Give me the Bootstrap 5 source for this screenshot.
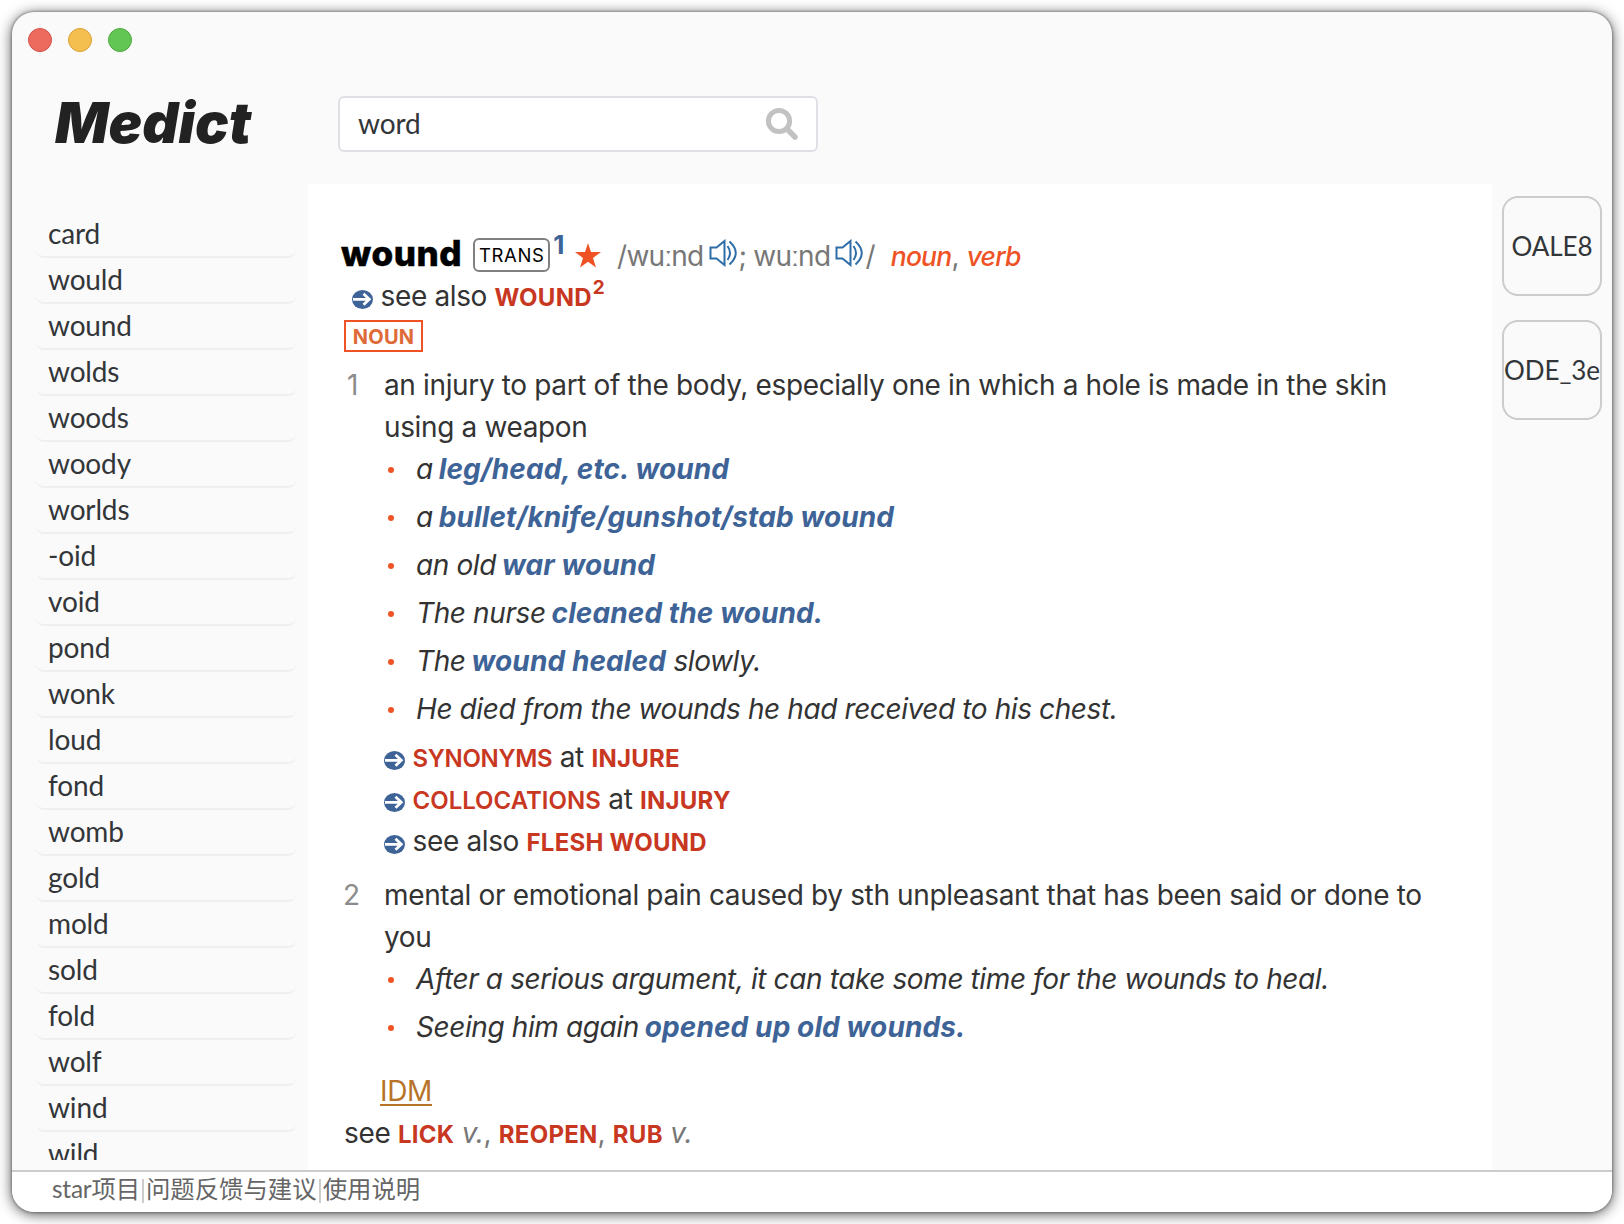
<!DOCTYPE html>
<html lang="en">
<head>
<meta charset="utf-8">
<meta name="viewport" content="width=device-width, initial-scale=1">
<title>Medict</title>
<link href="https://cdn.jsdelivr.net/npm/bootstrap@5.3.0/dist/css/bootstrap.min.css" rel="stylesheet">
<style>
html,body{height:100%;overflow:hidden}
body{background:#fff;padding:12px;font-family:Lato,"Noto Sans CJK SC",sans-serif;color:#303133}
.window{height:1200px;border-radius:22px;background:#fafafa;overflow:hidden;box-shadow:0 0 3px rgba(0,0,0,.5),0 2px 14px rgba(0,0,0,.7)}
.titlebar{height:56px;padding:16px 0 0 16px;gap:16px}
.light{width:24px;height:24px;border-radius:50%;border:1px solid}
.light-close{background:#ec6a5e;border-color:#d35349}
.light-min{background:#f5bf4f;border-color:#d8a13e}
.light-max{background:#61c654;border-color:#50a840}
.topbar{height:116px}
.logo{width:326px;padding-left:43px;font:italic 900 56px/1 Inter,sans-serif;color:#222;padding-top:27px}
.search{width:480px;height:56px;margin-top:28px;border:2px solid #dfdfe6;border-radius:6px;background:#fff;padding:0 17px 0 18px}
.search input{font-size:28px;color:#333639;letter-spacing:-.1px;margin-top:-2px}
.words{width:296px;padding:28px 12px 10px 24px}
.words ul{height:948px;overflow:hidden}
.words li{height:46px;border-bottom:2px solid #efeff2;border-radius:8px;font-size:28px;line-height:42px;padding-left:12px;color:#333639;letter-spacing:-.15px}
.article{background:#fff;padding:51.500px 40px 0 36px;font:400 28px/42px Inter,"Noto Sans",sans-serif;letter-spacing:-.36px;color:#333}
.article p{margin:0}
.article p span,.article p b,.article p em{line-height:0}
.head-row{height:40px;line-height:40px!important;white-space:nowrap}
.headword{font-size:35px;font-weight:800;color:#000;margin-left:-3px;letter-spacing:.6px;-webkit-text-stroke:.5px #000}
.trans{display:inline-block;width:77px;height:34px;border:2px solid #808080;border-radius:6px;font-size:18.500px;line-height:31px!important;text-align:center;color:#000;letter-spacing:.6px;vertical-align:4px;margin-left:11px}
.hom{font-size:26px;font-weight:700;color:#3e6397;vertical-align:12px;margin-left:3px}
.star{width:26px;height:25px;margin-left:11px;vertical-align:-2px}
.phon{color:#777;letter-spacing:-.75px}
.spk{width:29px;height:28px;vertical-align:-1px;margin-left:-2px;margin-right:1px}
.pos{color:#ef5325;font-style:italic;font-weight:500;font-size:26.500px;letter-spacing:-.8px}
.pos-first{margin-left:16px}
.arrow{width:21px;height:19px;vertical-align:-3px}
.xr{color:#c8371f;font-weight:700;font-size:24px;letter-spacing:.25px}
.xs{font-weight:600;letter-spacing:0}
.xs-tight{letter-spacing:-.35px}
.xr-sup{color:#c8371f;font-weight:700;font-size:19px;vertical-align:12px;margin-left:1px}
.pos-box{width:79px;height:32px;margin-top:4.500px;border:2px solid #ef5325;color:#de6a38;font-weight:700;font-size:20px;line-height:30px;text-align:center;letter-spacing:.3px}
.sense{margin-top:11.500px}
.sense + .sense{margin-top:12px}
.num{width:40px;color:#8c8c8c;flex:none}
.num-one{padding-left:3px}
.num-two{margin-left:-1px;margin-right:1px}
.ex{list-style:none;margin:0;padding:0}
.ex li{display:flex;font-style:italic;margin-bottom:6px;white-space:pre;letter-spacing:-.4px}
.ex li::before{content:"";width:6px;height:6px;border-radius:50%;background:#ef5325;margin:19px 22px 0 4px}
.ex b{color:#3e6397;font-weight:700;letter-spacing:.1px;margin-left:-1.500px}
.idm{color:#b8732a;text-decoration:underline;text-decoration-thickness:2px;text-underline-offset:3px;margin:16px 0 0 36px!important}
.gray{color:#777}
.dicts{width:120px;padding:12px 10px;gap:24px}
.dict{width:100px;height:100px;border:2px solid #ccc;border-radius:16px;font-size:26px;letter-spacing:-.05px;color:#333639;white-space:nowrap}
.statusbar{height:42px;border-top:2px solid #ccc;background:#fff;padding-left:40px;font-size:24.400px;line-height:33px;color:#666}
.statusbar a{color:#666}
.statusbar a:first-child{letter-spacing:-.2px}
.statusbar i{width:2px;height:24px;background:#ccc;margin:7px 2px 0}
</style>
</head>
<body>
<svg class="d-none">
<symbol id="spk" viewBox="0 0 29 28"><g fill="none" stroke="#2f6da8" stroke-width="2"><path d="M1.5 8.500H7.500L15.500 2V26L7.500 19.500H1.500Z"/><path d="M18.500 7Q23.500 14 18.500 21"/><path d="M20.500 2.500Q33 14 20.500 25.500"/></g></symbol>
<symbol id="arr" viewBox="0 0 21 19"><ellipse cx="10.500" cy="9.500" rx="10.500" ry="9.500" fill="#3e6397"/><path d="M1 9.300H17M11.500 3.800 17.300 9.300 11.500 14.800" fill="none" stroke="#fff" stroke-width="2.800"/></symbol>
</svg>
<div class="window d-flex flex-column">
  <div class="titlebar d-flex"><span class="light light-close"></span><span class="light light-min"></span><span class="light light-max"></span></div>
  <header class="topbar d-flex">
    <div class="logo">Medict</div>
    <div class="search d-flex align-items-center">
      <input class="form-control border-0 p-0 shadow-none bg-transparent" value="word" aria-label="Search">
      <svg class="flex-shrink-0" width="34" height="34" viewBox="0 0 34 34" fill="none" stroke="#c2c2c2"><circle cx="14" cy="14" r="10.600" stroke-width="5"/><path d="M22 22 30 30" stroke-width="5.500" stroke-linecap="round"/></svg>
    </div>
  </header>
  <div class="d-flex flex-grow-1 overflow-hidden">
    <nav class="words flex-shrink-0"><ul class="list-unstyled m-0">
      <li>card</li><li>would</li><li>wound</li><li>wolds</li><li>woods</li><li>woody</li><li>worlds</li><li>-oid</li><li>void</li><li>pond</li><li>wonk</li><li>loud</li><li>fond</li><li>womb</li><li>gold</li><li>mold</li><li>sold</li><li>fold</li><li>wolf</li><li>wind</li><li>wild</li>
    </ul></nav>
    <main class="article flex-grow-1">
      <p class="head-row"><span class="headword">wound</span><span class="trans">TRANS</span><span class="hom">1</span><svg class="star" viewBox="0 0 26 25"><path fill="#ef5325" d="M13 0 16 9H26L18 15 21 24.500 13 18.800 5 24.500 8 15 0 9H10Z"/></svg><span class="phon ms-3">/wuːnd <svg class="spk"><use href="#spk"/></svg>; wuːnd <svg class="spk"><use href="#spk"/></svg>/</span><span class="pos pos-first">noun</span><span class="gray">, </span><span class="pos">verb</span></p>
      <p class="head-row ps-2"><svg class="arrow"><use href="#arr"/></svg> see also <b class="xr">WOUND</b><b class="xr-sup">2</b></p>
      <div class="pos-box">NOUN</div>
      <section class="sense d-flex">
        <div class="num num-one">1</div>
        <div>
          <p>an injury to part of the body, especially one in which a hole is made in the skin using a weapon</p>
          <ul class="ex">
            <li>a <b>leg/head, etc. wound</b></li>
            <li>a <b>bullet/knife/gunshot/stab wound</b></li>
            <li>an old <b>war wound</b></li>
            <li>The nurse <b>cleaned the wound.</b></li>
            <li>The <b>wound healed</b> slowly.</li>
            <li>He died from the wounds he had received to his chest.</li>
          </ul>
          <p><svg class="arrow"><use href="#arr"/></svg> <b class="xr xs xs-tight">SYNONYMS</b> at <b class="xr">INJURE</b></p>
          <p><svg class="arrow"><use href="#arr"/></svg> <b class="xr xs">COLLOCATIONS</b> at <b class="xr">INJURY</b></p>
          <p><svg class="arrow"><use href="#arr"/></svg> see also <b class="xr">FLESH WOUND</b></p>
        </div>
      </section>
      <section class="sense d-flex">
        <div class="num num-two">2</div>
        <div>
          <p>mental or emotional pain caused by sth unpleasant that has been said or done to you</p>
          <ul class="ex">
            <li>After a serious argument, it can take some time for the wounds to heal.</li>
            <li>Seeing him again <b>opened up old wounds.</b></li>
          </ul>
        </div>
      </section>
      <p class="idm">IDM</p>
      <p>see <b class="xr">LICK</b> <em class="gray">v.</em><span class="gray">,</span> <b class="xr">REOPEN</b><span class="gray">,</span> <b class="xr">RUB</b> <em class="gray">v.</em></p>
    </main>
    <aside class="dicts d-flex flex-column flex-shrink-0">
      <div class="dict d-flex align-items-center justify-content-center">OALE8</div>
      <div class="dict d-flex align-items-center justify-content-center">ODE_3e</div>
    </aside>
  </div>
  <footer class="statusbar d-flex flex-shrink-0"><a class="text-decoration-none">star项目</a><i></i><a class="text-decoration-none">问题反馈与建议</a><i></i><a class="text-decoration-none">使用说明</a></footer>
</div>
<script src="https://cdn.jsdelivr.net/npm/bootstrap@5.3.0/dist/js/bootstrap.bundle.min.js"></script>
</body>
</html>
